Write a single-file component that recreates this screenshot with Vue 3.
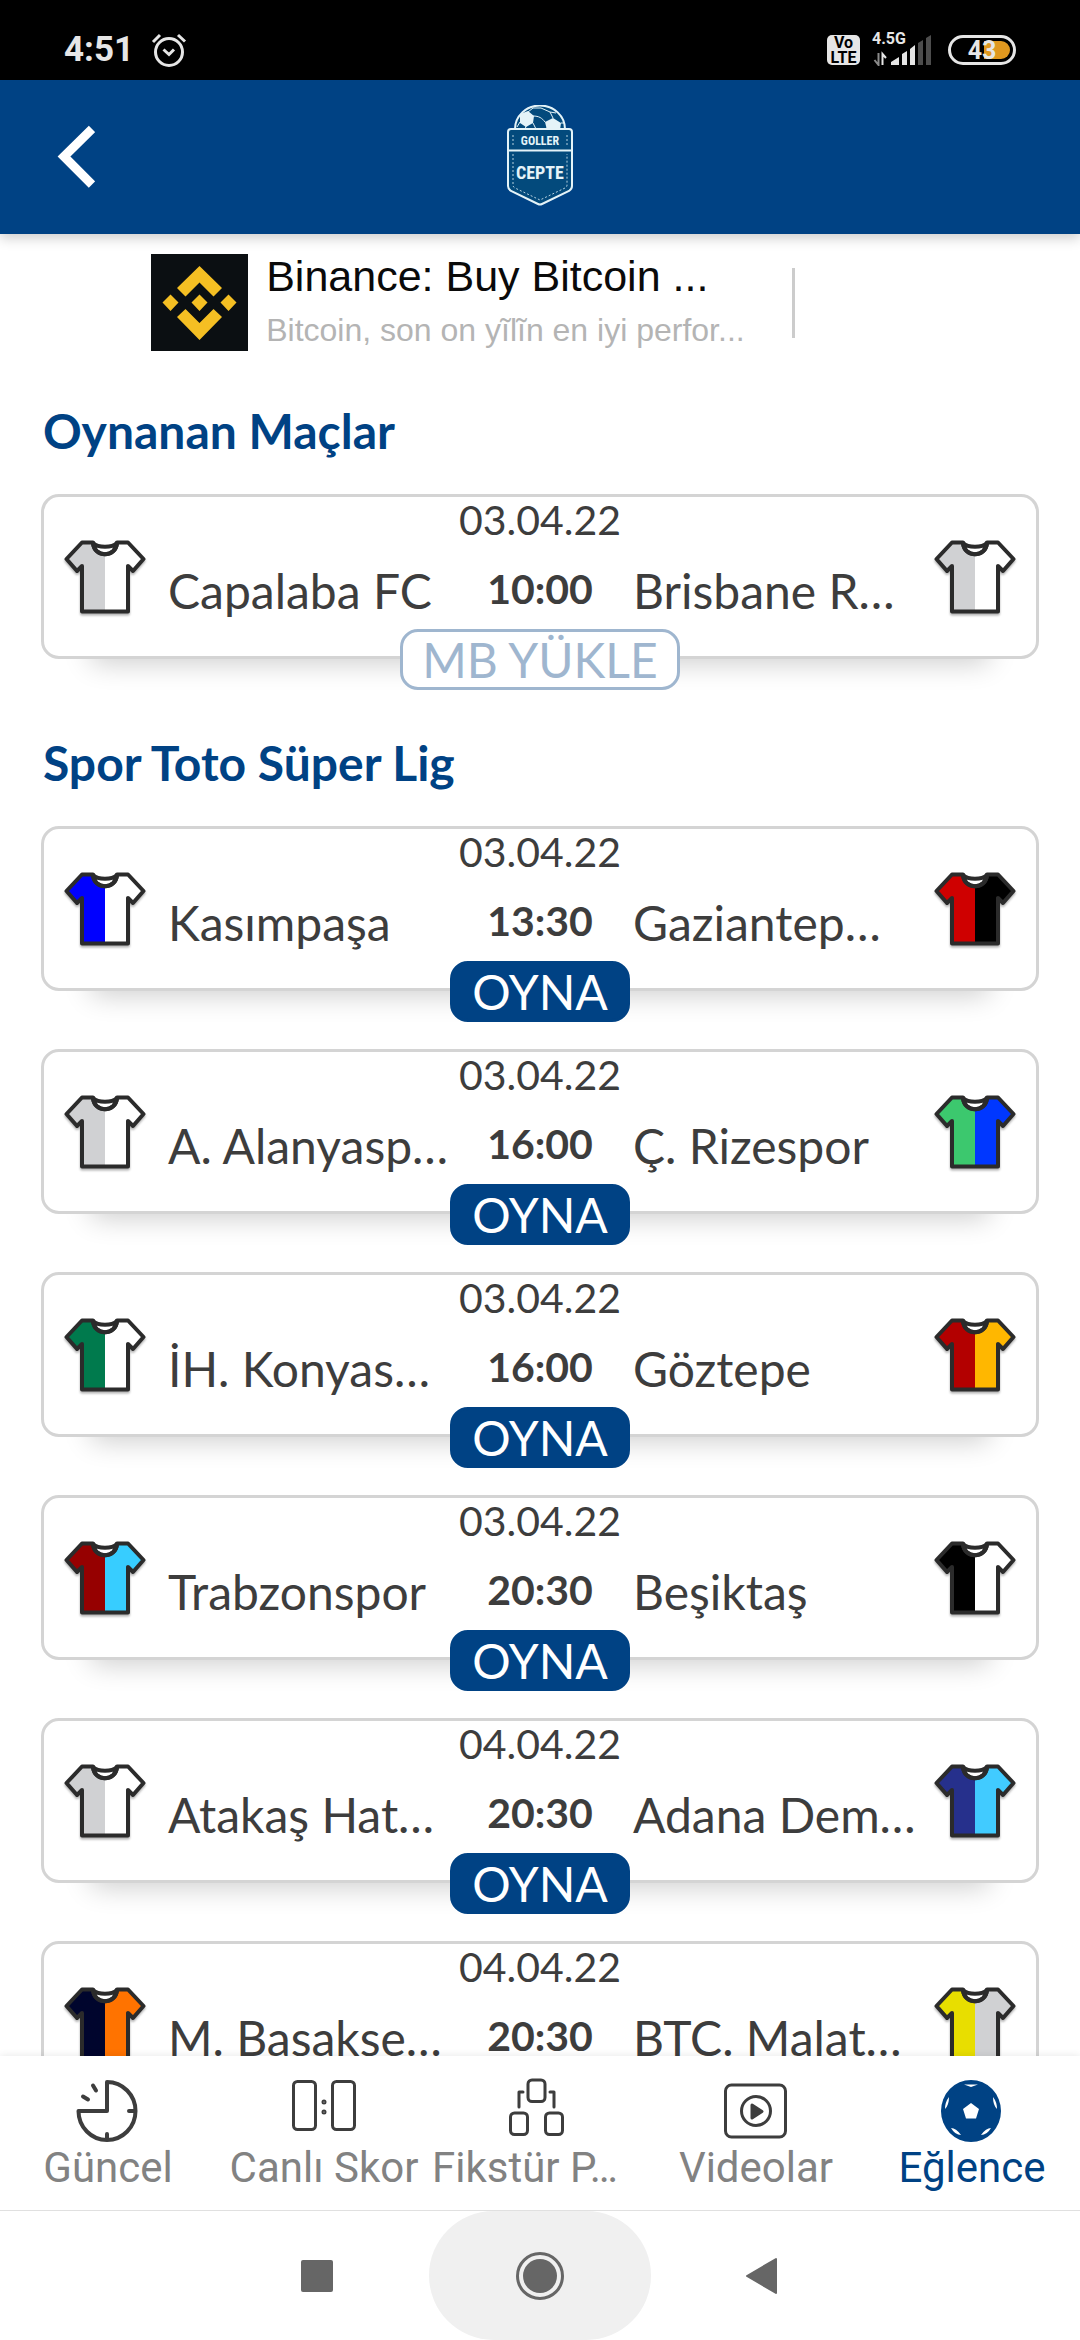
<template>
  <div class="screen">
    <div class="status-bar">
      <span class="clock">4:51</span>
      <svg class="alarm" viewBox="0 0 36 36" aria-hidden="true">
        <circle cx="18" cy="20" r="13.500" />
        <path d="M12.500 17.500 18 22.500l5-5M2 10l7-7M34 9.500l-7-6.500" />
      </svg>

      <div class="status-right">
        <div class="volte"><span>Vo</span><span>LTE</span></div>
        <div class="signal">
          <span class="network">4.5G</span>
          <svg viewBox="0 0 60 32" aria-hidden="true">
            <path d="M6.500 19v12l-4-5" stroke="#8a8a8a" stroke-width="2" fill="none" />
            <path d="M10.500 31V20l3.500 4" stroke="#e6e6e6" stroke-width="2" fill="none" />
            <path d="M19 31v-3l8-5v8zM30 31V20l5-3v14zM38 31V15l5-4v20z" fill="#e6e6e6" />
            <path d="M46 31V9l5-3v25zM54 31V4l5-3v30z" fill="#4d4d4d" />
          </svg>
        </div>
        <div class="battery">43</div>
      </div>
    </div>

    <header class="app-header">
      <button class="back" type="button" aria-label="Geri">
        <svg viewBox="0 0 38 64">
          <path d="M35 4 7 31.500l28 28" />
        </svg>
      </button>
      <svg class="logo" viewBox="0 2 66 104" role="img" aria-label="Goller Cepte">
        <path d="M8 26a25 23.500 0 0 1 50 0z" fill="#034a7c" />
        <path d="M8 26a25 23.500 0 0 1 50 0" class="logo-line" />
        <path d="M13 11l8-3 6 5-1 7-7 4-6-4zM38 19l8-4 8 5-1 7H40z" class="logo-fill" />
        <path d="M26 13c6 0 9 2 12 6M19 23l-1 4M13 19l-3 5M21 9l5-4 8 0M34 5l9 4 3 6M43 9l6 1M54 20h4M40 25l-6 2M26 20l3 6" class="logo-thin" />
        <path d="M4 26h58a3 3 0 0 1 3 3v54q0 3-3 5L35 101q-2 1-4 0L4 88q-3-2-3-5V29a3 3 0 0 1 3-3z" class="logo-badge" />
        <path d="M1 47.500h64" class="logo-line" />
        <path d="M6 32v11M60 32v11M6 51v31q0 2 2 3l25 12 25-12q2-1 2-3V51" class="logo-stitch" />
        <text x="33" y="42" class="logo-top">GOLLER</text>
        <text x="33" y="76" class="logo-bottom">CEPTE</text>
      </svg>
    </header>

    <main class="content">
      <a class="ad" href="#">
        <svg class="ad-icon" viewBox="0 0 97 97" aria-hidden="true">
          <rect width="97" height="97" fill="#0b0f12" />
          <g fill="#f5bf23">
            <path d="M48.500 12 71 34l-8.500 8.500-14-14-14 14L26 34z" />
            <path d="M48.500 86 71 63l-8.500-8-14 14-14-14L26 63z" />
            <path d="M48.500 40.500l8 8-8 8.500-8-8.500zM19.500 40.500l8 8-8 8.500-8-8.500zM77.500 40.500l8 8-8 8.500-8-8.500z" />
          </g>
        </svg>
        <div class="ad-text">
          <div class="ad-title">Binance: Buy Bitcoin ...</div>
          <div class="ad-desc">Bitcoin, son on yĩlĩn en iyi perfor...</div>
        </div>
      </a>

      <section v-for="league in leagues" :key="league.title" class="league">
        <h2>{{ league.title }}</h2>
        <div class="matches">
          <article v-for="match in league.matches" :key="match.home" class="match">
            <div class="card">
              <svg class="shirt" viewBox="0 0 82 76" aria-hidden="true">
                <path :d="leftHalf" :fill="match.homeColors[0]" />
                <path :d="rightHalf" :fill="match.homeColors[1]" />
                <path :d="collar" class="shirt-line collar" />
                <path :d="outline" class="shirt-line" />
              </svg>
              <div class="team">{{ match.home }}</div>
              <div class="when">
                <div class="date">{{ match.date }}</div>
                <div class="time">{{ match.time }}</div>
              </div>
              <div class="team">{{ match.away }}</div>
              <svg class="shirt" viewBox="0 0 82 76" aria-hidden="true">
                <path :d="leftHalf" :fill="match.awayColors[0]" />
                <path :d="rightHalf" :fill="match.awayColors[1]" />
                <path :d="collar" class="shirt-line collar" />
                <path :d="outline" class="shirt-line" />
              </svg>
            </div>
            <button type="button" class="play" :class="{ outlined: league.played }">
              {{ league.played ? 'MB YÜKLE' : 'OYNA' }}
            </button>
          </article>
        </div>
      </section>
    </main>

    <nav class="tabs">
      <a
        v-for="tab in tabs"
        :key="tab.name"
        href="#"
        class="tab"
        :class="{ active: activeTab === tab.name, truncated: tab.truncated }"
        @click.prevent="activeTab = tab.name"
      >
        <svg viewBox="0 0 64 64" aria-hidden="true">
          <g v-if="tab.name === 'news'" class="line">
            <path d="M31 2v29H2.500A28.500 29 0 1 0 31 2zM31 60v-6M59 31h-6" />
            <path d="M17 5.500l3 5M7 16.500l5 3" />
          </g>
          <g v-else-if="tab.name === 'live'" class="line thin">
            <rect x="1.500" y="1.500" width="22" height="48" rx="4" />
            <rect x="40.500" y="1.500" width="22" height="48" rx="4" />
            <circle cx="32" cy="22" r="1" />
            <circle cx="32" cy="32" r="1" />
          </g>
          <g v-else-if="tab.name === 'fixtures'" class="line thin">
            <rect x="20" y="0" width="17" height="21.500" rx="4" />
            <rect x="2.500" y="33" width="17" height="21.500" rx="4" />
            <rect x="37.500" y="33" width="17" height="21.500" rx="4" />
            <path d="M15 12h-4v15M42 12h4v15" />
          </g>
          <g v-else-if="tab.name === 'videos'" class="line thin">
            <rect x="1.500" y="5" width="60" height="52" rx="6" />
            <circle cx="32" cy="31" r="14.500" />
            <path d="M28 25v13l10-6.500z" class="solid" />
          </g>
          <g v-else>
            <ellipse cx="31" cy="31" rx="30" ry="31" fill="#004284" />
            <path
              d="M31 23l8 6-3 9.500H26L23 29zM24 4.500h14l-7 2.500zM53 17q4 5 4 12-4-4-4-12zM9 17q-4 5-4 12 4-4 4-12zM11 48q5 0 10 7-6 0-10-7zM51 48q-5 0-10 7 6 0 10-7z"
              fill="#fff"
            />
          </g>
        </svg>
        <span>{{ tab.label }}</span>
      </a>
    </nav>

    <div class="system-nav">
      <button type="button" aria-label="Son uygulamalar">
        <svg viewBox="0 0 48 48"><rect x="7" y="8" width="32" height="32" rx="2" fill="#666" /></svg>
      </button>
      <button type="button" class="pressed" aria-label="Ana ekran">
        <svg viewBox="0 0 48 48">
          <circle cx="24" cy="24" r="22.500" fill="none" stroke="#666" stroke-width="3" />
          <circle cx="24" cy="24" r="17" fill="#666" />
        </svg>
      </button>
      <button type="button" aria-label="Geri dön">
        <svg viewBox="0 0 48 48">
          <path d="M9 24 38 7v34z" fill="#666" stroke="#666" stroke-width="2" stroke-linejoin="round" />
        </svg>
      </button>
    </div>
  </div>
</template>

<script setup>
import { ref } from 'vue';

const activeTab = ref('fun');

// shirt shape, split down the middle for two team colours
const leftHalf = 'M18 2.500H29C30 9 34 15 41 15V71.500H18V26L13 31 2.500 19Z';
const rightHalf = 'M64 2.500H53C52 9 48 15 41 15V71.500H64V26L69 31 79.500 19Z';
const collar = 'M29 3C34 8 48 8 53 3C52 18 30 18 29 3Z';
const outline = 'M18 2.500H29C30 18 52 18 53 2.500H64L79.500 19 69 31 64 26V71.500H18V26L13 31 2.500 19Z';

const grey = '#d0d1d3';

const leagues = [
  {
    title: 'Oynanan Maçlar',
    played: true,
    matches: [
      { date: '03.04.22', time: '10:00', home: 'Capalaba FC', away: 'Brisbane R…', homeColors: [grey, '#fff'], awayColors: [grey, '#fff'] },
    ],
  },
  {
    title: 'Spor Toto Süper Lig',
    played: false,
    matches: [
      { date: '03.04.22', time: '13:30', home: 'Kasımpaşa', away: 'Gaziantep…', homeColors: ['#0000ff', '#fff'], awayColors: ['#cf0000', '#000'] },
      { date: '03.04.22', time: '16:00', home: 'A. Alanyasp…', away: 'Ç. Rizespor', homeColors: [grey, '#fff'], awayColors: ['#3cc86e', '#0037ff'] },
      { date: '03.04.22', time: '16:00', home: 'İH. Konyas…', away: 'Göztepe', homeColors: ['#007a4d', '#fff'], awayColors: ['#b30000', '#ffb700'] },
      { date: '03.04.22', time: '20:30', home: 'Trabzonspor', away: 'Beşiktaş', homeColors: ['#960000', '#37cdff'], awayColors: ['#000', '#fff'] },
      { date: '04.04.22', time: '20:30', home: 'Atakaş Hat…', away: 'Adana Dem…', homeColors: [grey, '#fff'], awayColors: ['#26308c', '#41cbff'] },
      { date: '04.04.22', time: '20:30', home: 'M. Başakşe…', away: 'BTC. Malat…', homeColors: ['#00052d', '#ff7300'], awayColors: ['#e8de00', grey] },
    ],
  },
];

const tabs = [
  { name: 'news', label: 'Güncel' },
  { name: 'live', label: 'Canlı Skor' },
  { name: 'fixtures', label: 'Fikstür P…', truncated: true },
  { name: 'videos', label: 'Videolar' },
  { name: 'fun', label: 'Eğlence' },
];
</script>

<style>
body {
  margin: 0;
  background: #fff;
}
</style>

<style scoped>
.screen {
  display: flex;
  flex-direction: column;
  height: 100vh;
  overflow: hidden;
  background: #fff;
  color: #3d3d3d;
  font-family: Lato, sans-serif;
}

button {
  margin: 0;
  padding: 0;
  border: 0;
  background: none;
  font: inherit;
  cursor: pointer;
}

/* status bar */
.status-bar {
  flex: none;
  display: flex;
  align-items: center;
  box-sizing: border-box;
  height: 80px;
  padding: 20px 64px 0;
  background: #000;
  color: #e6e6e6;
  font-family: Roboto, sans-serif;
}

.clock {
  font-size: 35px;
  line-height: 40px;
  font-weight: 700;
}

.alarm {
  width: 36px;
  height: 36px;
  margin-left: 17px;
  fill: none;
  stroke: currentColor;
  stroke-width: 3;
}

.status-right {
  display: flex;
  align-items: center;
  gap: 12px;
  margin-left: auto;
}

.volte {
  display: flex;
  flex-direction: column;
  align-items: center;
  width: 33px;
  height: 30px;
  border-radius: 5px;
  background: #e6e6e6;
  color: #000;
  font-size: 16px;
  line-height: 15px;
  font-weight: 700;
}

.signal {
  position: relative;
  height: 32px;
}

.signal svg {
  display: block;
  width: 60px;
  height: 32px;
}

.network {
  position: absolute;
  top: -4px;
  left: 0;
  font-size: 16px;
  line-height: 18px;
  font-weight: 700;
}

.battery {
  box-sizing: border-box;
  width: 68px;
  height: 30px;
  margin-left: 4px;
  border: 3px solid #e6e6e6;
  border-radius: 15px;
  background: radial-gradient(circle at 16px 9px, #e0981f 9px, transparent 10px) no-repeat right / 25px 100% content-box,
    linear-gradient(#e0981f, #e0981f) no-repeat 33px 3px / 17px 18px;
  padding: 3px;
  font-size: 25px;
  line-height: 19px;
  font-weight: 700;
  text-align: center;
}

/* header */
.app-header {
  flex: none;
  position: relative;
  z-index: 2;
  display: grid;
  grid-template-columns: 1fr auto 1fr;
  align-items: center;
  height: 154px;
  padding: 0 57px;
  background: #004284;
  box-shadow: 0 4px 12px rgba(0, 0, 0, 0.2);
}

.back {
  justify-self: start;
}

.back svg {
  display: block;
  width: 38px;
  height: 64px;
  fill: none;
  stroke: #fff;
  stroke-width: 9;
}

.logo {
  width: 66px;
  height: 104px;
  color: #e4f3f8;
}

.logo-line,
.logo-thin,
.logo-stitch,
.logo-badge {
  fill: none;
  stroke: currentColor;
  stroke-width: 2;
}

.logo-badge {
  fill: #034a7c;
}

.logo-fill {
  fill: currentColor;
}

.logo-thin {
  stroke-width: 1;
}

.logo-stitch {
  stroke-width: 1;
  stroke-dasharray: 2 2;
  opacity: 0.8;
}

.logo-top,
.logo-bottom {
  fill: currentColor;
  font-family: 'Liberation Sans Narrow', 'Roboto Condensed', Roboto, sans-serif;
  font-weight: 700;
  text-anchor: middle;
}

.logo-top {
  font-size: 12px;
}

.logo-bottom {
  font-size: 18px;
}

/* content */
.content {
  flex: 1;
  min-height: 0;
  overflow: hidden;
}

.ad {
  display: flex;
  align-items: center;
  gap: 18px;
  width: 644px;
  margin-left: 14%;
  padding: 20px 0 7px;
  color: #0a0a0a;
  font-family: 'Liberation Sans', Arial, sans-serif;
  text-decoration: none;
}

.ad-icon {
  flex: none;
  width: 97px;
  height: 97px;
}

.ad-text {
  flex: 1;
  height: 97px;
  white-space: nowrap;
  background: linear-gradient(#ccc, #ccc) no-repeat right / 3px 70px;
}

.ad-title {
  font-size: 43px;
  line-height: 44px;
}

.ad-desc {
  margin-top: 8px;
  color: #b4b4b4;
  font-size: 32px;
  line-height: 48px;
}

.league {
  padding: 44px 41px 0;
}

.league h2 {
  margin: 0 0 34px;
  padding-left: 2px;
  color: #004284;
  font-size: 48px;
  line-height: 58px;
  font-weight: 700;
}

.matches {
  display: flex;
  flex-direction: column;
  gap: 27px;
}

.match {
  display: flex;
  flex-direction: column;
  align-items: center;
}

.card {
  display: flex;
  align-items: flex-start;
  box-sizing: border-box;
  width: 100%;
  padding: 0 20px 36px;
  border: 3px solid #d4d4d4;
  border-radius: 18px;
  background: #fff;
  box-shadow: 0 54px 28px -50px rgba(0, 0, 0, 0.2);
}

.shirt {
  flex: none;
  width: 82px;
  height: 76px;
  margin-top: 43px;
  filter: drop-shadow(0 2px 1px rgba(0, 0, 0, 0.3));
}

.shirt-line {
  fill: none;
  stroke: #2b2b2b;
  stroke-width: 4;
  stroke-linejoin: round;
}

.shirt-line.collar {
  fill: #fff;
}

.team {
  flex: 1;
  min-width: 0;
  margin-top: 65px;
  padding-left: 22px;
  font-size: 48px;
  line-height: 58px;
  white-space: nowrap;
}

.when {
  flex: none;
  width: 164px;
  text-align: center;
}

.when + .team {
  padding-left: 11px;
  padding-right: 11px;
}

.date {
  font-size: 41px;
  line-height: 46px;
}

.time {
  margin-top: 22px;
  font-size: 41px;
  line-height: 48px;
  font-weight: 700;
}

.play {
  position: relative;
  margin-top: -30px;
  padding: 0 19px;
  border: 3px solid #004284;
  border-radius: 18px;
  background: #004284;
  color: #fff;
  font-size: 48px;
  line-height: 55px;
}

.play.outlined {
  border-color: #9fb6cf;
  background: #fff;
  color: #9fb6cf;
}

/* tab bar */
.tabs {
  flex: none;
  position: relative;
  z-index: 2;
  display: flex;
  padding: 24px 0 18px;
  background: #fff;
  box-shadow: 0 0 8px rgba(0, 0, 0, 0.1);
}

.tab {
  flex: 1;
  min-width: 0;
  display: flex;
  flex-direction: column;
  align-items: center;
  color: #828282;
  font-family: Roboto, sans-serif;
  font-size: 42px;
  line-height: 48px;
  text-decoration: none;
  white-space: nowrap;
}

.tab svg {
  width: 64px;
  height: 64px;
  overflow: visible;
}

.tab.truncated span {
  align-self: flex-start;
}

.tab.active {
  color: #004284;
}

.line {
  fill: none;
  stroke: #3d3d3d;
  stroke-width: 4;
  stroke-linecap: round;
  stroke-linejoin: round;
}

.line.thin {
  stroke-width: 3;
}

.line .solid {
  fill: #3d3d3d;
}

/* system navigation */
.system-nav {
  flex: none;
  position: relative;
  z-index: 3;
  display: flex;
  justify-content: center;
  border-top: 1px solid #e0e0e0;
  background: #fff;
}

.system-nav button {
  display: flex;
  align-items: center;
  justify-content: center;
  width: 222px;
  height: 129px;
  border-radius: 65px;
}

.system-nav button.pressed {
  background: #f0f0f0;
}

.system-nav svg {
  width: 48px;
  height: 48px;
}
</style>
